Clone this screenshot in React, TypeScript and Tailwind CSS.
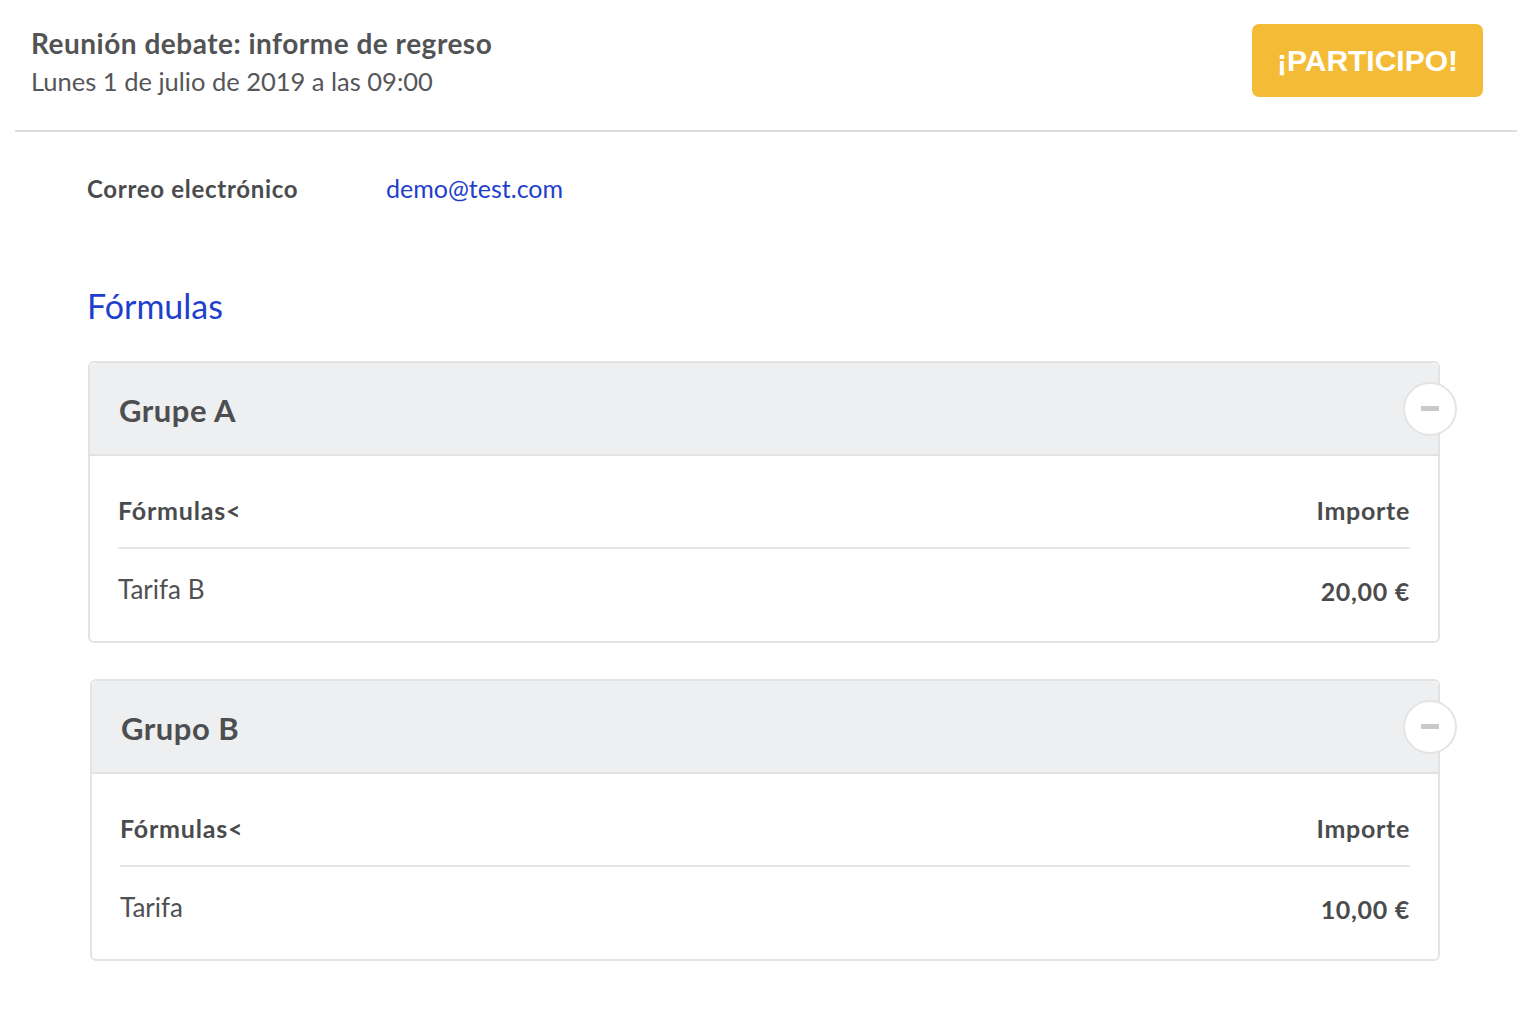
import React from "react";

type Row = { name: string; price: string };

type Group = {
    title: string;
    rows: Row[];
};

const groups: Group[] = [
    { title: "Grupe A", rows: [{ name: "Tarifa B", price: "20,00 €" }] },
    { title: "Grupo B", rows: [{ name: "Tarifa", price: "10,00 €" }] },
];

const GroupCard = ({ group, offset }: { group: Group; offset: string }) => {
    return (
        <div className={`${offset} rounded-md border-2 border-[#e3e3e3] bg-white`}>
            <div className="relative flex h-[93px] items-center rounded-t-md border-b-2 border-[#e3e3e3] bg-[#eeeff1] pl-[29px] pt-[4px]">
                <h3 className="text-[31px] font-bold tracking-[0.5px] text-[#4d4e50]">{group.title}</h3>
                <button className="absolute -right-[19px] top-[19px] flex h-[54px] w-[54px] items-center justify-center rounded-full border-2 border-[#e4e4e4] bg-white">
                    <span className="block h-[5px] w-[18px] bg-[#c9c9c9]" />
                </button>
            </div>
            <div className="px-[28px] pb-[12px]">
                <div className="flex h-[93px] items-start justify-between border-b-2 border-[#e6e6e6] pt-[36px] text-[25px] leading-[36px] font-bold tracking-[0.7px] text-[#4a4b4d]">
                    <span className="tracking-[0.8px]">Fórmulas&lt;</span>
                    <span>Importe</span>
                </div>
                {group.rows.map((row) => (
                    <div key={row.name} className="flex h-[80px] items-center justify-between pt-[2px] text-[26px] text-[#4f5052]">
                        <span>{row.name}</span>
                        <span className="pt-[4px] text-[25px] font-bold tracking-[0.7px] text-[#4a4b4d]">{row.price}</span>
                    </div>
                ))}
            </div>
        </div>
    );
};

export default function App() {
    return (
        <div className="min-h-screen w-[1536px] bg-white font-['Lato','Noto_Sans',sans-serif]">
            <header className="ml-[15px] mr-[19px] flex h-[132px] items-start justify-between border-b-2 border-[#dedede] pr-[34px]">
                <div className="pl-[16px] pt-[26px]">
                    <h1 className="text-[28px] font-bold leading-[34px] tracking-[0.5px] text-[#525355]">
                        Reunión debate: informe de regreso
                    </h1>
                    <p className="mt-[6px] text-[25.5px] leading-[30px] text-[#55565a]">
                        Lunes 1 de julio de 2019 a las 09:00
                    </p>
                </div>
                <button className="mt-[24px] h-[73px] w-[231px] rounded-[7px] bg-[#f4bc36] font-['Liberation_Sans',sans-serif] text-[30px] font-bold text-white">
                    ¡PARTICIPO!
                </button>
            </header>

            <main className="pt-[38px]">
                <div className="flex items-center pl-[87px]">
                    <span className="w-[299px] text-[24px] font-bold tracking-[0.7px] text-[#4a4b4d]">Correo electrónico</span>
                    <a href="#" className="text-[25px] text-[#1f3fcc]">demo@test.com</a>
                </div>

                <h2 className="mt-[78px] pl-[87px] text-[34px] leading-[40px] text-[#1f3fcc]">Fórmulas</h2>

                <div className="mt-[35px] flex flex-col gap-[36px] pb-[64px]">
                    <GroupCard group={groups[0]} offset="ml-[88px] w-[1352px]" />
                    <GroupCard group={groups[1]} offset="ml-[90px] w-[1350px]" />
                </div>
            </main>
        </div>
    );
}
